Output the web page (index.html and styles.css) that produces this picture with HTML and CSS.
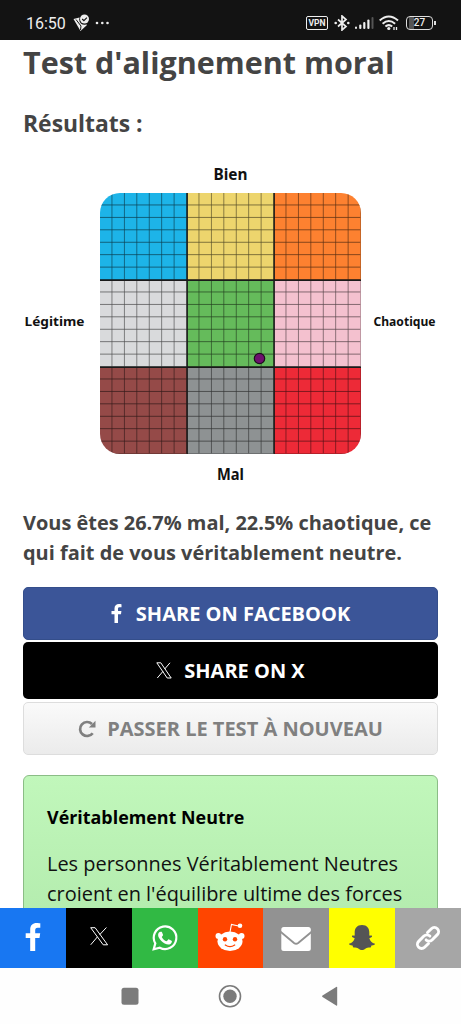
FILE: index.html
```html
<!DOCTYPE html>
<html lang="fr">
<head>
    <meta charset="UTF-8">
    <title>Test d'alignement moral</title>
    <link rel="stylesheet" href="styles.css">
</head>
<body>
    <div class="status-bar">
        <span class="clock">16:50</span>
        <svg class="status-left" width="38" height="18" viewBox="0 0 38 18">
            <path d="M.5 5l6-1.500 5 3L14 11l-6.500 6z" fill="#eee"/>
            <path d="M3 5.500l5 6.500-.5 4" fill="none" stroke="#131313" stroke-width="1"/>
            <circle cx="11.500" cy="5.500" r="5.300" fill="#131313"/>
            <circle cx="11.500" cy="5" r="4.500" fill="#eee"/>
            <path d="M9.200 5l1.700 1.700 3-3" fill="none" stroke="#131313" stroke-width="1.200"/>
            <circle cx="24" cy="9" r="1.300" fill="#eee"/>
            <circle cx="29.300" cy="9" r="1.300" fill="#eee"/>
            <circle cx="34.500" cy="9" r="1.300" fill="#eee"/>
        </svg>
        <div class="status-icons">
            <span class="vpn">VPN</span>
            <svg class="bluetooth" width="16" height="16" viewBox="0 0 16 16">
                <path d="M4 4.500l8 7L8 15V1l4 3.500-8 7" fill="none" stroke="#eee" stroke-width="1.700"/>
                <circle cx="1.700" cy="8" r="1.300" fill="#eee"/>
                <circle cx="14.300" cy="8" r="1.300" fill="#eee"/>
            </svg>
            <svg class="signal" width="20" height="12" viewBox="0 0 20 12">
                <g fill="#eee">
                    <rect x="0" y="9.500" width="2" height="2.500" rx="1"/>
                    <rect x="4.200" y="7.500" width="2.200" height="4.500" rx="1"/>
                    <rect x="8.200" y="5" width="2.200" height="7" rx="1"/>
                    <rect x="12.300" y="2.500" width="2.200" height="9.500" rx="1"/>
                </g>
                <rect x="16.500" y="0" width="2" height="12" rx="1" fill="#555"/>
            </svg>
            <svg class="wifi" width="20" height="16" viewBox="0 0 20 16">
                <g fill="none" stroke="#eee" stroke-width="2">
                    <path d="M.7 5.600Q9.800-2.500 19 5.600"/>
                    <path d="M3.600 8.700Q9.800 3.200 16.100 8.700"/>
                    <path d="M6.400 11.600Q9.800 8.700 13.200 11.600"/>
                </g>
                <circle cx="9.800" cy="13.500" r="1.600" fill="#eee"/>
                <path d="M15 15v-3M17.500 12v3" stroke="#eee" stroke-width="1.300"/>
            </svg>
            <span class="battery">27</span>
        </div>
    </div>

    <div class="page">
        <h1>Test d'alignement moral</h1>
        <h2>Résultats :</h2>

        <svg class="chart" width="415" height="330" viewBox="0 0 415 330">
            <defs>
                <clipPath id="rounded"><rect x="77" y="33" width="261" height="261" rx="20"/></clipPath>
                <pattern id="lines" x="77" y="33" width="12.430" height="12.430" patternUnits="userSpaceOnUse">
                    <path d="M12.430 0V12.430H0" fill="none" stroke="#000" stroke-opacity=".65" stroke-width="1.300"/>
                </pattern>
            </defs>
            <g clip-path="url(#rounded)">
                <rect x="77" y="33" width="87" height="87" fill="#1db4e8"/>
                <rect x="164" y="33" width="87" height="87" fill="#edd56d"/>
                <rect x="251" y="33" width="87" height="87" fill="#fd8130"/>
                <rect x="77" y="120" width="87" height="87" fill="#d9dadc"/>
                <rect x="164" y="120" width="87" height="87" fill="#65bb5b"/>
                <rect x="251" y="120" width="87" height="87" fill="#f4c1cf"/>
                <rect x="77" y="207" width="87" height="87" fill="#954a48"/>
                <rect x="164" y="207" width="87" height="87" fill="#8e9293"/>
                <rect x="251" y="207" width="87" height="87" fill="#ed2a37"/>
                <rect x="77" y="33" width="260.500" height="260.500" fill="url(#lines)"/>
                <path d="M164.200 33v261M251.200 33v261M77 120.300h261M77 207.300h261" stroke="#1a1a1a" stroke-width="1.400"/>
            </g>
            <circle cx="236.500" cy="198.500" r="5.200" fill="#6d126d" stroke="#1c101c" stroke-width="1.200"/>
            <text class="axis" x="207.500" y="20" text-anchor="middle" textLength="34" lengthAdjust="spacingAndGlyphs">Bien</text>
            <text class="axis" x="207.500" y="319.500" text-anchor="middle" textLength="27" lengthAdjust="spacingAndGlyphs">Mal</text>
            <text class="axis side" x="1.500" y="166" textLength="60" lengthAdjust="spacingAndGlyphs">Légitime</text>
            <text class="axis side" x="350.500" y="166" textLength="62" lengthAdjust="spacingAndGlyphs">Chaotique</text>
        </svg>

        <p class="verdict">Vous êtes 26.7% mal, 22.5% chaotique, ce<br>qui fait de vous véritablement neutre.</p>

        <a class="button facebook">
            <svg width="11" height="19" viewBox="0 0 11 19"><path d="M10.500.2v3H8.700C7.300 3.200 7 3.900 7 4.900V7h3.400L10 10.300H7V19H3.500v-8.700H.5V7h3V4.500C3.500 1.600 5.300 0 7.900 0c1.200 0 2.300.1 2.600.2z" fill="#fff"/></svg>
            <span>SHARE ON FACEBOOK</span>
        </a>
        <a class="button x">
            <svg width="16" height="17" viewBox="0 0 16 17"><path d="M.8.800h4L15.200 16h-4zM14 .8L8.700 7M7 9.300L1.300 16" fill="none" stroke="#fff" stroke-width="1"/></svg>
            <span>SHARE ON X</span>
        </a>
        <a class="button retry">
            <svg width="18" height="18" viewBox="0 0 18 18"><path d="M14.700 13.200A7 7 0 1 1 14 4" fill="none" stroke="#808080" stroke-width="2.700"/><path d="M17.500.8v6.700h-6.700z" fill="#808080"/></svg>
            <span>PASSER LE TEST À NOUVEAU</span>
        </a>

        <div class="result">
            <h3>Véritablement Neutre</h3>
            <p>Les personnes Véritablement Neutres<br>croient en l'équilibre ultime des forces</p>
        </div>
    </div>

    <div class="share-bar">
        <a class="share-facebook">
            <svg width="32" height="32" viewBox="0 0 32 32"><path d="M23.300 1.300v4.500h-2.600c-2 0-2.500 1-2.500 2.500v3h5l-.7 4.600h-4.300V29h-5V15.900H8.700v-4.600h4.500V7.500c0-4.400 2.600-6.600 6.400-6.600 1.800 0 3.400.3 3.700.4z" fill="#fff"/></svg>
        </a>
        <a class="share-x">
            <svg width="32" height="32" viewBox="0 0 32 32"><path d="M7.700 5.700h4.400L24.600 22.800h-4.400zM23.400 5.500l-6.700 7.200M14.400 14.900L7.700 22.800" fill="none" stroke="#fff" stroke-width="1"/></svg>
        </a>
        <a class="share-whatsapp">
            <svg width="32" height="32" viewBox="0 0 32 32">
                <path d="M4.700 27.300l1.600-5.900A11.300 11.300 0 1 1 10.800 25.700z" fill="none" stroke="#fff" stroke-width="2.200"/>
                <path d="M11.800 9.800c.5-.1 1 0 1.200.5l1 2.400c.2.400 0 .8-1.200 2.200 1.100 2.200 2.700 3.600 4.900 4.400l1.400-1.600c.3-.4.600-.4 1-.2l2.400 1.200c.5.200.5.500.4 1-.4 2-2.100 2.800-3.600 2.800-2 0-5.200-1.500-7.200-3.700-1.700-1.900-3-3.800-3-5.700 0-1.700 1-3.100 2.700-3.300z" fill="#fff"/>
            </svg>
        </a>
        <a class="share-reddit">
            <svg width="32" height="32" viewBox="0 0 32 32">
                <path d="M15.800 11l1.700-8.500 7 1.500" fill="none" stroke="#fff" stroke-width="1.100"/>
                <circle cx="26" cy="3.800" r="2.300" fill="#fff"/>
                <circle cx="4.400" cy="14" r="2.900" fill="#fff"/>
                <circle cx="27.600" cy="14" r="2.900" fill="#fff"/>
                <ellipse cx="16" cy="19.300" rx="12.500" ry="9.700" fill="#fff"/>
                <circle cx="11" cy="17.300" r="2.200" fill="#ff4500"/>
                <circle cx="21" cy="17.300" r="2.200" fill="#ff4500"/>
                <path d="M11.300 23q4.700 3.300 9.400 0" fill="none" stroke="#ff4500" stroke-width="1.300" stroke-linecap="round"/>
            </svg>
        </a>
        <a class="share-email">
            <svg width="32" height="32" viewBox="0 0 32 32">
                <rect x="1.300" y="5" width="29.500" height="24" rx="2.500" fill="#fff"/>
                <path d="M.5 9.700l13.500 11.300q2.100 1.500 4.200 0l13.500-11.300" fill="none" stroke="#929292" stroke-width="1.900"/>
            </svg>
        </a>
        <a class="share-snapchat">
            <svg width="32" height="32" viewBox="0 0 32 32"><path d="M16 3c5 0 7.300 3.400 7.300 7.500v3.100c1.200.2 2.300-.3 2.700.3.500.9-1.200 1.700-2.700 2.300.9 3 2.500 4.600 5.700 5.500.3.800-.9 1.500-3.500 1.900-.6.500 0 1.700-1 1.900-1.600.1-3-.3-4.500.8-1.300 1-2.400 1.800-4 1.800s-2.700-.8-4-1.800c-1.500-1.100-2.900-.7-4.500-.8-1-.2-.4-1.400-1-1.900-2.600-.4-3.800-1.100-3.500-1.900 3.200-.9 4.800-2.500 5.700-5.500-1.500-.6-3.200-1.400-2.700-2.300.4-.6 1.500-.1 2.700-.3v-3.100C8.700 6.400 11 3 16 3z" fill="#555"/></svg>
        </a>
        <a class="share-link">
            <svg width="32" height="32" viewBox="0 0 32 32">
                <g transform="rotate(-45 16 16)" fill="none" stroke="#fff" stroke-width="2.900" stroke-linecap="round">
                    <path d="M12.500 20.200H7a4.200 4.200 0 0 1 0-8.400h7.500a4.200 4.200 0 0 1 4.200 4.200"/>
                    <path d="M19.500 11.800H25a4.200 4.200 0 0 1 0 8.400h-7.500a4.200 4.200 0 0 1-4.200-4.200"/>
                </g>
            </svg>
        </a>
    </div>

    <div class="nav-bar">
        <svg width="24" height="24" viewBox="0 0 24 24"><rect x="3.500" y="3.800" width="17" height="17" rx="2.500" fill="#7b7b7b"/></svg>
        <svg width="24" height="24" viewBox="0 0 24 24"><circle cx="12" cy="12.300" r="10.500" fill="none" stroke="#7b7b7b" stroke-width="1.600"/><circle cx="12" cy="12.300" r="6.700" fill="#7b7b7b"/></svg>
        <svg width="24" height="24" viewBox="0 0 24 24"><path d="M19.200 3.500v17.600q0 1-1 .5L4.500 13q-1-.7 0-1.400L18.200 3q1-.5 1 .5z" fill="#7b7b7b"/></svg>
    </div>
</body>
</html>
```
FILE: styles.css
```css
body {
    margin: 0;
    height: 1024px;
    display: flex;
    flex-direction: column;
    overflow: hidden;
    background: #fff;
    color: #444;
    font-family: "Open Sans", "Noto Sans", sans-serif;
}
svg {
    display: block;
    flex: none;
}
.status-bar {
    height: 40px;
    flex: none;
    box-sizing: border-box;
    padding: 6px 28px 0 26px;
    display: flex;
    align-items: center;
    background: #131313;
    color: #eee;
    font-family: Roboto, sans-serif;
}
.clock {
    width: 40px;
    font-size: 16px;
}
.status-left {
    margin-left: 7px;
}
.status-icons {
    margin-left: auto;
    display: flex;
    align-items: center;
}
.vpn {
    width: 22px;
    height: 14px;
    box-sizing: border-box;
    border: 1.5px solid #eee;
    border-radius: 2px;
    font-size: 8.5px;
    font-weight: bold;
    line-height: 12px;
    text-align: center;
}
.bluetooth {
    margin-left: 6px;
}
.signal {
    margin-left: 5px;
}
.wifi {
    margin-left: 4px;
}
.battery {
    position: relative;
    margin-left: 7px;
    width: 27px;
    height: 14px;
    box-sizing: border-box;
    border: 1.5px solid #ddd;
    border-radius: 4px;
    background: linear-gradient(90deg, #131313 2px, #555 2px, #555 7px, #131313 7px);
    font-size: 10px;
    font-weight: 500;
    line-height: 12px;
    text-align: center;
}
.battery::after {
    content: "";
    position: absolute;
    right: -4px;
    top: 4px;
    width: 2px;
    height: 4px;
    background: #ddd;
}
.page {
    flex: 1;
    min-height: 0;
    overflow: hidden;
    padding: 0 23px;
}
h1 {
    margin: 0;
    font-size: 30.5px;
    line-height: 44px;
    white-space: nowrap;
}
h2 {
    margin: 24px 0 0;
    font-size: 22.9px;
    line-height: 32px;
}
.chart {
    margin-top: 20px;
    overflow: visible;
}
.axis {
    font-family: "Noto Sans", sans-serif;
    font-size: 15.5px;
    font-weight: bold;
    fill: #111;
}
.side {
    font-size: 12.8px;
}
.verdict {
    margin: 18px 0 19px;
    font-size: 19.95px;
    font-weight: bold;
    line-height: 30px;
    white-space: nowrap;
}
.button {
    display: flex;
    align-items: center;
    justify-content: center;
    box-sizing: border-box;
    height: 53px;
    border-radius: 5px;
    color: #fff;
    font-size: 20px;
    font-weight: bold;
    white-space: nowrap;
}
.facebook {
    gap: 14px;
    border: 1px solid #344e8b;
    background: #3b5598;
}
.x {
    gap: 12px;
    height: 57px;
    margin-top: 2px;
    background: #000;
}
.retry {
    gap: 11px;
    margin-top: 3px;
    border: 1px solid #ddd;
    background: linear-gradient(#fafafa, #ebebeb);
    color: #808080;
}
.result {
    margin-top: 20px;
    height: 300px;
    padding: 26px 23px;
    border: 1px solid #8bbd86;
    border-radius: 6px;
    background: linear-gradient(#c1f7bb, #a0dc9b);
    color: #111;
    white-space: nowrap;
}
h3 {
    margin: 0;
    color: #000;
    font-size: 17.9px;
    line-height: 30px;
}
.result p {
    margin: 17px 0 0;
    font-size: 19.95px;
    line-height: 30px;
}
.share-bar {
    flex: none;
    height: 60px;
    display: grid;
    grid-template-columns: repeat(7, 1fr);
}
.share-bar a {
    display: flex;
    align-items: center;
    justify-content: center;
}
.share-facebook {
    background: #1877f2;
}
.share-x {
    background: #000;
}
.share-whatsapp {
    background: #31b944;
}
.share-reddit {
    background: #ff4500;
}
.share-email {
    background: #929292;
}
.share-snapchat {
    background: #ffff00;
}
.share-link {
    background: #a6a6a6;
}
.nav-bar {
    flex: none;
    height: 56px;
    box-sizing: border-box;
    padding-right: 2px;
    display: flex;
    align-items: center;
    justify-content: center;
    gap: 76px;
    background: #fefefe;
}
```
